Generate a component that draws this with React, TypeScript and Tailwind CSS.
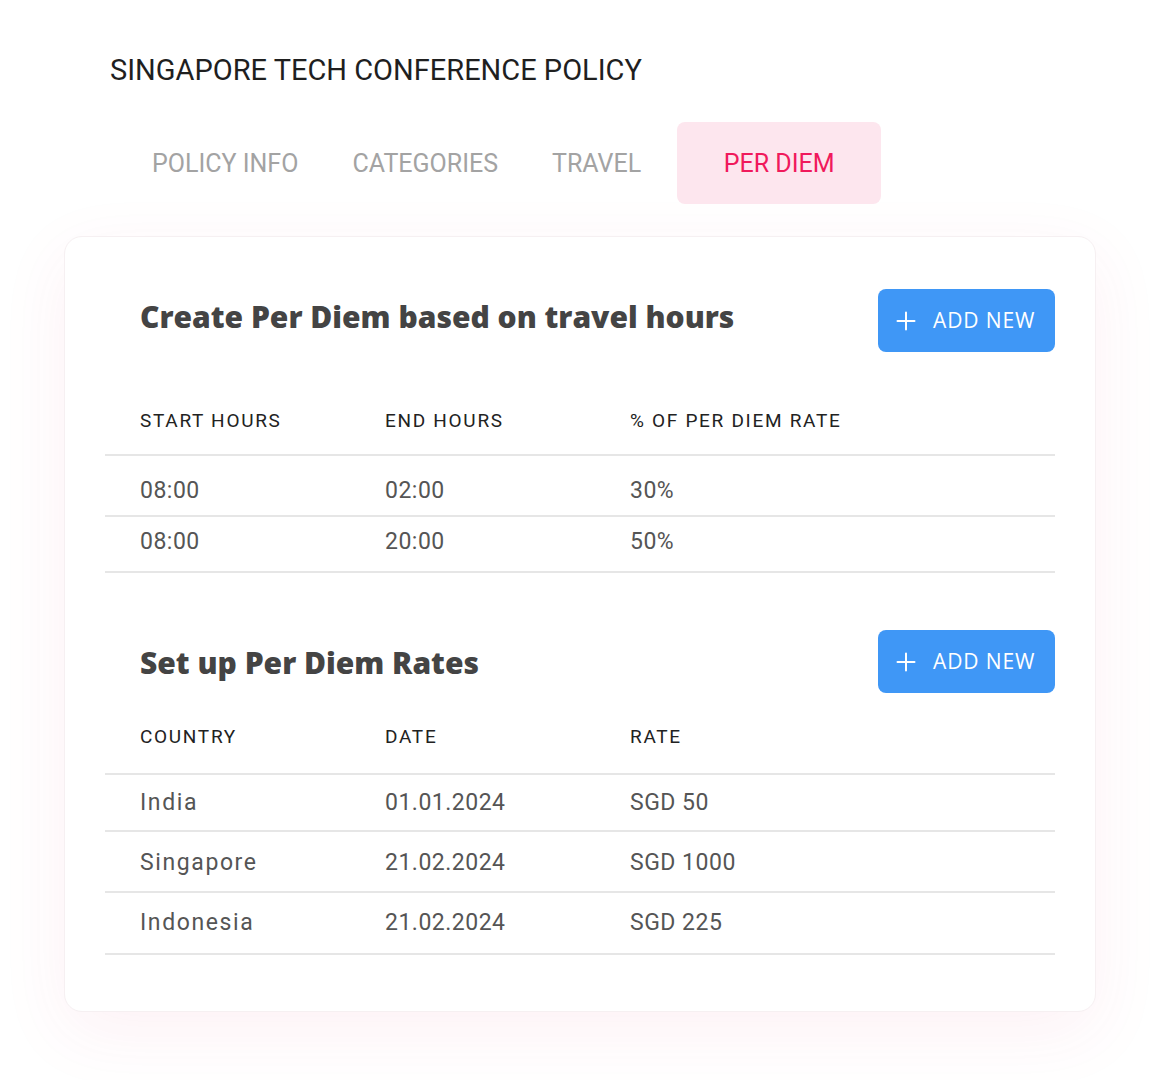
import React from "react";

const hours = [
  ["08:00", "02:00", "30%"],
  ["08:00", "20:00", "50%"],
];
const rates = [
  ["India", "01.01.2024", "SGD 50"],
  ["Singapore", "21.02.2024", "SGD 1000"],
  ["Indonesia", "21.02.2024", "SGD 225"],
];

function AddButton() {
  return (
    <button className="flex h-[63px] w-[177px] items-center rounded-[8px] bg-[#3f97f6] pl-[18px] text-white [font-family:'Open_Sans',sans-serif]">
      <svg width="20" height="20" viewBox="0 0 20 20" className="mr-[17px]">
        <path d="M10 1.5v17M1.5 10h17" stroke="white" strokeWidth="2" strokeLinecap="round" />
      </svg>
      <span className="text-[21px] tracking-[0.9px]">ADD NEW</span>
    </button>
  );
}

function Cell({ children, head, wide }: { children: React.ReactNode; head?: boolean; wide?: boolean }) {
  if (head) return <div className="w-[245px] text-[19px] tracking-[1.7px] text-[#222]">{children}</div>;
  return (
    <div className={wide ? "w-[245px] text-[23px] tracking-[1.6px] text-[#555]" : "w-[245px] text-[23px] tracking-[0.5px] text-[#555]"}>
      {children}
    </div>
  );
}

export default function App() {
  return (
    <div className="min-h-[1080px] w-[1164px] bg-white [font-family:Roboto,'Open_Sans',sans-serif]">
      <div className="pl-[110px] pt-[51px] text-[29px] leading-[38px] text-[#1f1f1f]">
        SINGAPORE TECH CONFERENCE POLICY
      </div>
      <div className="mt-[33px] flex h-[82px] items-center pl-[152px] text-[25px] text-[#a3a3a3]">
        <span className="pt-[2px]">POLICY INFO</span>
        <span className="ml-[54px] pt-[2px]">CATEGORIES</span>
        <span className="ml-[54px] pt-[2px]">TRAVEL</span>
        <div className="ml-[36px] flex h-[82px] w-[204px] items-center justify-center rounded-[8px] bg-[#fde6ee] pt-[2px] text-[#f01a5c]">
          PER DIEM
        </div>
      </div>
      <div className="ml-[64px] mt-[32px] w-[1032px] rounded-[18px] border border-[#f6f0f2] bg-white px-[40px] pb-[56px] pt-[52px] shadow-[0_20px_70px_rgba(230,60,110,0.07)]">
        <div className="flex items-center justify-between pl-[35px]">
          <h2 className="-mt-[8px] text-[30px] font-extrabold leading-[40px] text-[#444] [font-family:'Open_Sans',sans-serif]">
            Create Per Diem based on travel hours
          </h2>
          <AddButton />
        </div>
        <div className="mt-[34px] flex h-[70px] items-center border-b-2 border-[#e6e6e6] pl-[35px] pt-[3px]">
          <Cell head>START HOURS</Cell>
          <Cell head>END HOURS</Cell>
          <Cell head>% OF PER DIEM RATE</Cell>
        </div>
        {hours.map((r, i) => (
          <div
            key={i}
            className={
              "flex items-center border-b-2 border-[#e6e6e6] pl-[35px] " +
              (i === 0 ? "h-[61px] pt-[11px]" : "h-[56px] pb-[3px]")
            }
          >
            {r.map((c, j) => (
              <Cell key={j}>{c}</Cell>
            ))}
          </div>
        ))}
        <div className="mt-[57px] flex items-center justify-between pl-[35px]">
          <h2 className="mt-[3px] text-[30px] font-extrabold leading-[40px] text-[#444] [font-family:'Open_Sans',sans-serif]">
            Set up Per Diem Rates
          </h2>
          <AddButton />
        </div>
        <div className="mt-[8px] flex h-[74px] items-center border-b-2 border-[#e6e6e6] pl-[35px]">
          <Cell head>COUNTRY</Cell>
          <Cell head>DATE</Cell>
          <Cell head>RATE</Cell>
        </div>
        {rates.map((r, i) => (
          <div
            key={i}
            className={
              "flex items-center border-b-2 border-[#e6e6e6] pl-[35px] " +
              (i === 0 ? "h-[57px] pt-[2px]" : i === 1 ? "h-[61px] pt-[3px]" : "h-[62px]")
            }
          >
            {r.map((c, j) => (
              <Cell key={j} wide={j === 0}>
                {c}
              </Cell>
            ))}
          </div>
        ))}
      </div>
    </div>
  );
}
